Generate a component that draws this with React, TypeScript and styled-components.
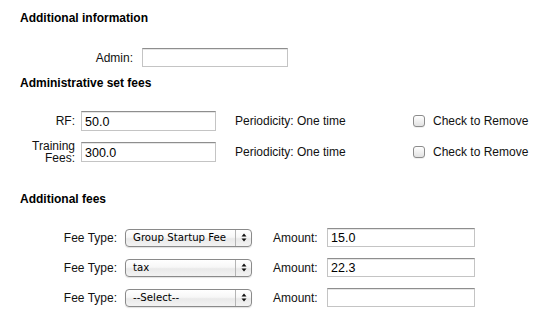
import React from "react";
import styled, { createGlobalStyle } from "styled-components";

const GlobalStyle = createGlobalStyle`
  html, body {
    margin: 0;
    padding: 0;
    background: #ffffff;
  }
  body {
    font-family: "Liberation Sans", Arial, sans-serif;
    font-size: 12px;
    color: #111;
  }
`;

const Page = styled.div`
  width: 554px;
  height: 325px;
  padding-top: 11px;
  box-sizing: border-box;
  overflow: hidden;
`;

const Heading = styled.h3<{ $top?: number }>`
  margin: ${(p) => p.$top ?? 0}px 0 0 20px;
  font-size: 12px;
  line-height: 14px;
  font-weight: bold;
  color: #000;
`;

const Row = styled.div<{ $top?: number }>`
  display: flex;
  align-items: center;
  margin-top: ${(p) => p.$top ?? 0}px;
`;

const Label = styled.label<{ $width: number; $gap: number }>`
  width: ${(p) => p.$width}px;
  margin-right: ${(p) => p.$gap}px;
  flex-shrink: 0;
  text-align: right;
  line-height: 12px;
`;

const TextInput = styled.input<{ $width: number; $height?: number }>`
  width: ${(p) => p.$width}px;
  height: ${(p) => p.$height ?? 20}px;
  box-sizing: border-box;
  margin: 0;
  padding: 1px 3px 0;
  border: 1px solid #c4c4c4;
  border-top-color: #8e8e8e;
  border-radius: 0;
  box-shadow: inset 0 1px 0 #e6e6e6;
  font-family: "Liberation Sans", Arial, sans-serif;
  font-size: 12.5px;
  color: #000;
  background: #fff;
  outline: none;
  flex-shrink: 0;
`;

const Periodicity = styled.span`
  margin-left: 19px;
  width: 178px;
  flex-shrink: 0;
`;

const CheckWrap = styled.label`
  display: flex;
  align-items: center;
  gap: 8px;
`;

const CheckBox = styled.span`
  width: 12px;
  height: 12px;
  box-sizing: border-box;
  border: 1px solid #8c8c8c;
  border-radius: 3px;
  background: linear-gradient(#ffffff, #e2e2e2);
  box-shadow: 0 1px 0 rgba(0, 0, 0, 0.06);
`;

const Select = styled.div`
  position: relative;
  width: 127px;
  height: 18px;
  box-sizing: border-box;
  border: 1px solid #8a8a8a;
  border-radius: 4px;
  background: linear-gradient(#ffffff 0%, #f7f7f7 45%, #e9e9e9 55%, #f3f3f3 100%);
  box-shadow: 0 1px 1px rgba(0, 0, 0, 0.12);
  display: flex;
  align-items: center;
  flex-shrink: 0;
`;

const SelectText = styled.span`
  flex: 1;
  padding-left: 7px;
  font-family: "DejaVu Sans", "Liberation Sans", sans-serif;
  font-size: 10.2px;
  color: #000;
  white-space: nowrap;
`;

const SelectArrows = styled.span`
  width: 15px;
  height: 16px;
  border-left: 1px solid #b4b4b4;
  display: flex;
  align-items: center;
  justify-content: center;
`;

const AmountLabel = styled.span`
  margin-left: 21px;
  width: 54px;
  flex-shrink: 0;
`;

function Arrows() {
  return (
    <SelectArrows>
      <svg width="6" height="9" viewBox="0 0 6 9">
        <path d="M3 0.5 L5.5 3.5 H0.5 Z" fill="#111" />
        <path d="M3 8.5 L5.5 5.5 H0.5 Z" fill="#111" />
      </svg>
    </SelectArrows>
  );
}

const setFees = [
  { label: "RF:", value: "50.0", top: 21 },
  { label: "Training Fees:", value: "300.0", top: 9 },
];

const extraFees = [
  { type: "Group Startup Fee", amount: "15.0", top: 22 },
  { type: "tax", amount: "22.3", top: 11 },
  { type: "--Select--", amount: "", top: 11 },
];

export default function App() {
  return (
    <>
      <GlobalStyle />
      <Page>
        <Heading>Additional information</Heading>
        <Row $top={23}>
          <Label $width={133} $gap={9}>Admin:</Label>
          <TextInput $width={146} $height={19} defaultValue="" />
        </Row>
        <Heading $top={9}>Administrative set fees</Heading>
        {setFees.map((f) => (
          <Row key={f.label} $top={f.top}>
            <Label $width={75} $gap={6}>{f.label}</Label>
            <TextInput $width={135} defaultValue={f.value} />
            <Periodicity>Periodicity: One time</Periodicity>
            <CheckWrap>
              <CheckBox />
              Check to Remove
            </CheckWrap>
          </Row>
        ))}
        <Heading $top={28}>Additional fees</Heading>
        {extraFees.map((f) => (
          <Row key={f.type} $top={f.top}>
            <Label $width={117} $gap={8}>Fee Type:</Label>
            <Select>
              <SelectText>{f.type}</SelectText>
              <Arrows />
            </Select>
            <AmountLabel>Amount:</AmountLabel>
            <TextInput $width={148} $height={19} defaultValue={f.amount} />
          </Row>
        ))}
      </Page>
    </>
  );
}
